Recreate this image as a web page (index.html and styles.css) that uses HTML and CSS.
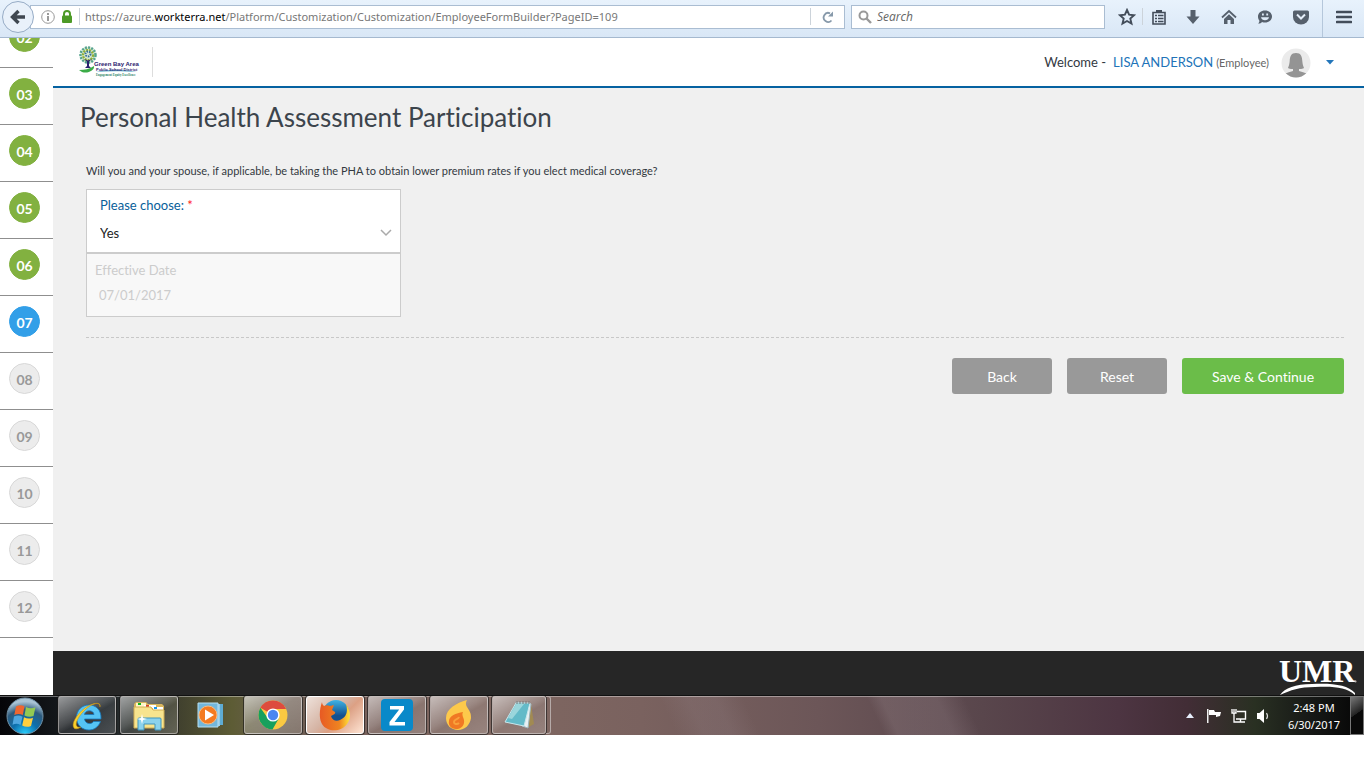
FILE: index.html
```html
<!DOCTYPE html>
<html lang="en">
<head>
<meta charset="utf-8">
<title>Personal Health Assessment Participation</title>
<link rel="stylesheet" href="styles.css">
</head>
<body>
<nav class="browser" aria-label="Browser toolbar">
  <button class="back-btn" aria-label="Go back">
    <svg width="18" height="16" viewBox="0 0 18 16"><path d="M16 8H4M9.500 2L3.500 8l6 6" fill="none" stroke="#3f4750" stroke-width="3.400"/></svg>
  </button>
  <div class="address">
    <svg width="14" height="14" viewBox="0 0 14 14"><circle cx="7" cy="7" r="6.300" fill="none" stroke="#999"/><path d="M6 3h2v2H6zM6 6h2v5H6z" fill="#999"/></svg>
    <svg class="lock" width="12" height="14" viewBox="0 0 12 14"><rect x="1" y="5.500" width="10" height="7.500" rx="1" fill="#4d9a27"/><path d="M3 6V4a3 3 0 0 1 6 0v2" fill="none" stroke="#4d9a27" stroke-width="2"/></svg>
    <span class="rule"></span>
    <span class="url">https://azure.<b>workterra.net</b>/Platform/Customization/Customization/EmployeeFormBuilder?PageID=109</span>
    <span class="rule"></span>
    <button class="reload" aria-label="Reload"><svg width="14" height="14" viewBox="0 0 14 14"><path d="M10.500 10.500A4.500 4.500 0 1 1 9 3.300" fill="none" stroke="#8799aa" stroke-width="1.800"/><path d="M12 1.500v5H7z" fill="#8799aa"/></svg></button>
  </div>
  <label class="search">
    <svg width="14" height="14" viewBox="0 0 14 14"><circle cx="5.500" cy="5.500" r="4" fill="none" stroke="#999" stroke-width="2"/><path d="M8.500 8.500l4.500 4.500" stroke="#999" stroke-width="2.400"/></svg>
    <input type="search" placeholder="Search" aria-label="Search">
  </label>
  <div class="tools">
    <button class="tool" aria-label="Bookmark"><svg width="18" height="18" viewBox="0 0 18 18"><path d="M9 2l2.100 4.700 5 .5-3.800 3.400 1.200 5L9 13l-4.500 2.600 1.200-5L1.900 7.200l5-.5z" fill="none" stroke="#434d5a" stroke-width="1.900"/></svg></button>
    <span class="rule"></span>
    <button class="tool" aria-label="Bookmarks list"><svg width="16" height="16" viewBox="0 0 16 16"><path d="M2 3.500h12v11.500H2z" fill="#dfebf8" stroke="#434d5a" stroke-width="1.600"/><path d="M5 1h6v3H5z" fill="#434d5a"/><path d="M4 6.500h2M4 9.500h2M4 12.500h2M7 6.500h5.500M7 9.500h5.500M7 12.500h5.500" stroke="#434d5a" stroke-width="1.300"/></svg></button>
    <button class="tool" aria-label="Downloads"><svg width="16" height="16" viewBox="0 0 16 16"><path d="M5.500 1h5v6.500h4L8 15 1.500 7.500h4z" fill="#56606c"/></svg></button>
    <button class="tool" aria-label="Home"><svg width="16" height="16" viewBox="0 0 16 16"><path d="M1 8.500L8 2l7 6.500" fill="none" stroke="#56606c" stroke-width="1.800"/><path d="M3 10l5-4.800 5 4.800v5H9.500v-4h-3v4H3z" fill="#56606c"/></svg></button>
    <button class="tool" aria-label="Chat"><svg width="16" height="16" viewBox="0 0 16 16"><path d="M8 1.500c4 0 7 2.600 7 6s-3 6-7 6c-1 0-2-.1-3-.5-1 1.300-2.600 1.800-4 1.500 1-.8 1.400-1.700 1.400-2.800C1.500 10.600 1 9.100 1 7.500c0-3.400 3-6 7-6z" fill="#56606c"/><path d="M4 8.200h8c-.5 4-7.500 4-8 0zM5 4.500h1.800v2H5zM9.300 4.500h1.800v2H9.300z" fill="#dfebf8"/></svg></button>
    <button class="tool" aria-label="Pocket"><svg width="18" height="16" viewBox="0 0 18 16"><path d="M2.500 1.500h13q1.500 0 1.500 1.500v5a8 7.500 0 0 1-16 0V3q0-1.500 1.500-1.500z" fill="#56606c"/><path d="M5 5.500l4 4 4-4" fill="none" stroke="#e5eef9" stroke-width="2"/></svg></button>
    <button class="tool menu" aria-label="Menu"><svg width="16" height="14" viewBox="0 0 16 14"><path d="M1 2h14M1 7h14M1 12h14" stroke="#434d5a" stroke-width="2.600" stroke-linecap="round"/></svg></button>
  </div>
</nav>

<div class="page">
  <aside class="sidebar">
    <ol class="steps">
      <li><a class="step done" href="#s2">02</a></li>
      <li><a class="step done" href="#s3">03</a></li>
      <li><a class="step done" href="#s4">04</a></li>
      <li><a class="step done" href="#s5">05</a></li>
      <li><a class="step done" href="#s6">06</a></li>
      <li><a class="step current" href="#s7" aria-current="step">07</a></li>
      <li><a class="step" href="#s8">08</a></li>
      <li><a class="step" href="#s9">09</a></li>
      <li><a class="step" href="#s10">10</a></li>
      <li><a class="step" href="#s11">11</a></li>
      <li><a class="step" href="#s12">12</a></li>
    </ol>
  </aside>
  <div class="content">
    <header class="site-head">
      <svg class="brand" width="62" height="32" viewBox="0 0 62 32" role="img" aria-label="Green Bay Area Public School District">
        <circle cx="10" cy="9" r="8" fill="#d5e7cf"/>
        <circle cx="10" cy="9" r="7.500" fill="none" stroke="#55a38d" stroke-width="2.500" stroke-dasharray="2 1.200"/>
        <circle cx="10" cy="9" r="5" fill="none" stroke="#8eae35" stroke-width="2.200" stroke-dasharray="2 1"/>
        <circle cx="10" cy="8" r="2.500" fill="none" stroke="#356e9e" stroke-width="2" stroke-dasharray="1.500 1"/>
        <path d="M6 13l3 2.500V20l-2 2h6l-2-2v-4.500l3-2.500-4 1.500z" fill="#29206f"/>
        <path d="M1 24c6 0 10-1 15-4 1 4-6 8-12 6z" fill="#3cac48"/>
        <path d="M18 26c12-3 25-3 41 0-16-1-28-1-41 0z" fill="#65b1ce"/>
        <text class="brand-name" x="16" y="20">Green Bay Area</text>
        <text class="brand-sub" x="18" y="25">Public School District</text>
        <text class="brand-motto" x="18" y="30">Engagement Equity Excellence</text>
      </svg>
      <span class="brand-rule"></span>
      <div class="user">
        <span class="welcome">Welcome -</span>
        <a class="user-name" href="#profile">LISA ANDERSON</a>
        <span class="role">(Employee)</span>
        <svg class="avatar" width="30" height="30" viewBox="0 0 30 30"><defs><clipPath id="face"><circle cx="15" cy="15" r="14.500"/></clipPath></defs><circle cx="15" cy="15" r="14.500" fill="#ebebeb"/><path clip-path="url(#face)" d="M15 5c5 0 6 3.500 6.300 8 .2 3 .9 5 1.700 7-1.500 1-3.500 1.200-5 1v2c3 1 7 1.500 9 4v4H3v-4c2-2.500 6-3 9-4v-2c-1.500.2-3.500 0-5-1 .8-2 1.500-4 1.700-7C9 8.500 10 5 15 5z" fill="#949494"/></svg>
        <button class="caret" aria-label="Account menu"><svg width="8" height="5" viewBox="0 0 8 5"><path d="M0 0h8L4 4.500z" fill="#2376ba"/></svg></button>
      </div>
    </header>
    <main>
      <h1>Personal Health Assessment Participation</h1>
      <form class="form">
        <p class="question">Will you and your spouse, if applicable, be taking the PHA to obtain lower premium rates if you elect medical coverage?</p>
        <div class="field">
          <label for="choice">Please choose: <span class="required">*</span></label>
          <div class="select-row">
            <select id="choice"><option>Yes</option><option>No</option></select>
            <svg width="12" height="8" viewBox="0 0 12 8"><path d="M1 1l5 5 5-5" fill="none" stroke="#aaa" stroke-width="1.500"/></svg>
          </div>
        </div>
        <div class="field disabled">
          <label for="date">Effective Date</label>
          <input id="date" type="text" value="07/01/2017" disabled>
        </div>
        <div class="actions">
          <button type="button">Back</button>
          <button type="reset">Reset</button>
          <button type="button" class="primary">Save &amp; Continue</button>
        </div>
      </form>
    </main>
    <footer class="site-foot">
      <svg width="80" height="42" viewBox="0 0 80 42" role="img" aria-label="UMR"><text class="umr" x="1" y="29">UMR</text><path d="M2 42c5-7 15-11 32-11 21-1 36 1 43 9v2c-9-8-22-9-40-8-16 0-24 3-35 8z" fill="#fff"/><circle cx="77.500" cy="28.500" r="1" fill="#bbb"/></svg>
    </footer>
  </div>
</div>

<div class="taskbar">
  <button class="start" aria-label="Start"><svg width="38" height="38" viewBox="0 0 38 38"><defs><radialGradient id="orb" cx=".5" cy="1" r=".9"><stop offset="0" stop-color="#2bd2ff"/><stop offset=".4" stop-color="#0c70ae"/><stop offset=".75" stop-color="#2d5a7d"/><stop offset="1" stop-color="#a9c3d4"/></radialGradient></defs><circle cx="19" cy="19" r="18" fill="url(#orb)" stroke="#6f8fa5"/><path d="M10 9.500c3-1.800 6-1.500 8.500-.2L16.800 18c-2.500-1.300-5.500-1.500-8.500 0z" fill="#ee6630"/><path d="M20 10c3 1.500 6 1.700 9.500.3L27.500 19c-3 1.200-6 1-9-.5z" fill="#93c952"/><path d="M8 19.500c3-1.500 6-1.300 8.500.2L14.500 28c-2.500-1.500-5-1.600-8-.2z" fill="#4fa6df"/><path d="M18 20.300c3 1.500 6 1.700 9 .4L25 29c-3 1.300-6 1-8.800-.4z" fill="#ffcf3e"/></svg></button>
  <button class="task" aria-label="Internet Explorer"><svg width="32" height="32" viewBox="0 0 32 32"><path fill-rule="evenodd" d="M30 20H13.500c.5 5 7 6 9 2.500h7C27.500 28 23 31 18 31 11 31 5.500 26 5.500 18.500S11 6 18 6s12.500 5 12 14zM13.500 15.500H23c-.5-5-9-5-9.500 0z" fill="#55c4f5" stroke="#1878bd" stroke-width=".8"/><path d="M29 8c1.500-6-8-4-15 1C5 16 0 25 3 29c1 1.500 4 1 7-1-4 1-5.500-1-4.500-5C8 16 17 6 25 4.500c3-.5 4 1 4 3.500z" fill="#fad02c" stroke="#c69112" stroke-width=".5"/></svg></button>
  <button class="task" aria-label="Windows Explorer"><svg width="34" height="32" viewBox="0 0 34 32"><path d="M2 5l2-2h10l2 2h14l2 2v20H2z" fill="#d9b65d"/><path d="M4 4h10v5H4z" fill="#fff6c9"/><path d="M6 4h3v2H6z" fill="#12b51b"/><path d="M12 6h12v3H12z" fill="#fff"/><path d="M14 6h3v2h-3z" fill="#d64228"/><path d="M21 8h10v3H21z" fill="#fff"/><path d="M22 8h3v2h-3z" fill="#1696ed"/><path d="M2 8h17l2 3h11v18H2z" fill="#f8e48e" stroke="#d1ae54"/><path d="M6 31V20q0-1 1-1h21q1 0 1 1v11h-6v-6H12v6z" fill="#8bd2ed" stroke="#4195bd"/><path d="M10 15l1 4 4 1-4 1-1 4-1-4-4-1 4-1z" fill="#fff"/></svg></button>
  <button class="task plain" aria-label="Media Player"><svg width="30" height="30" viewBox="0 0 30 30"><path d="M12 4h15v21H12z" fill="#5eacd3"/><path d="M8 4h16v22H8z" fill="#93cbe7"/><path d="M2 3h20v24H2z" fill="#72b7db" stroke="#b8dff0"/><circle cx="12" cy="15" r="9" fill="#f47b21" stroke="#f9bb80"/><path d="M9 9.500v11L18 15z" fill="#fff"/></svg></button>
  <button class="task light" aria-label="Chrome"><svg width="30" height="30" viewBox="0 0 30 30"><circle cx="15" cy="15" r="14.500" fill="#fbc942"/><path d="M15 15L2.400 7.800A14.500 14.500 0 0 1 27.600 8L28 9H15z" fill="#dd4b3e"/><path d="M2.400 7.800A14.500 14.500 0 0 0 14.500 29.500L21 18l-6 3-6-4z" fill="#17a05d"/><circle cx="15" cy="15" r="6.600" fill="#fff"/><circle cx="15" cy="15" r="5.200" fill="#4a86f0"/></svg></button>
  <button class="task active" aria-label="Firefox"><svg width="32" height="32" viewBox="0 0 32 32"><defs><linearGradient id="fox" x2="1"><stop offset="0" stop-color="#e75a24"/><stop offset=".65" stop-color="#ef8420"/><stop offset="1" stop-color="#ffe63b"/></linearGradient><linearGradient id="globe" x2="0" y2="1"><stop offset="0" stop-color="#3fb4e6"/><stop offset=".6" stop-color="#14508e"/></linearGradient></defs><circle cx="17" cy="14" r="13" fill="url(#globe)"/><path d="M3 3c0 2 1 3 2 4 2-1 4-1 6 0l4-1-2 5 3 2c1 2-2 3-4 4 1 4 5 6 9 4 7-3 8-9 6-16 5 7 5 15 1 20-5 7-15 8-21 4C-1 24 0 12 3 3z" fill="url(#fox)"/></svg></button>
  <button class="task" aria-label="Z"><svg width="32" height="32" viewBox="0 0 32 32"><rect width="32" height="32" rx="4" fill="#0989c9"/><path d="M9 7h14v3.500L13.500 23H24v3.500H8.500V23L18.200 10.500H9z" fill="#fff"/></svg></button>
  <button class="task" aria-label="Flame"><svg width="30" height="32" viewBox="0 0 30 32"><path d="M23 1c-4 7 5 9 4 18-1 7-6 12-13 12S2 26 2 19C2 10 12 4 23 1z" fill="#fdc94b"/><path d="M19 13c-2 4 2 6 1 11-1 4-4 6-8 6-5 0-8-4-7-8 0-5 7-8 14-9z" fill="#f07924"/><path d="M15 18c-1 3-5 2-5 5 0 2 3 3 5 1" fill="none" stroke="#f9a13b" stroke-width="2"/></svg></button>
  <button class="task last" aria-label="Notepad"><svg width="32" height="32" viewBox="0 0 32 32"><path d="M28 5l3 20-7 4z" fill="#a18a52"/><path d="M13 3l15 2-3 24-6-2z" fill="#e8f0f2" stroke="#9eb6be"/><path d="M13 4h14l-6 23-19-4z" fill="#63bac8" stroke="#c8e7ec"/><path d="M13 5h8L9 20l-4-1z" fill="#9bd6dc"/><path d="M14 2v3M17 2v3M20 2v3M23 2v3M26 2v3" stroke="#777"/></svg></button>
  <span class="stack"></span>
  <div class="tray">
    <svg class="more" width="8" height="5" viewBox="0 0 8 5"><path d="M0 5h8L4 0z" fill="#e7eefc"/></svg>
    <svg width="16" height="16" viewBox="0 0 16 16"><path d="M1 1h1.500v14H1z" fill="#eee"/><path d="M3 2h5l1 2h6l-1 4-4 1V7H3z" fill="#fff"/></svg>
    <svg width="16" height="16" viewBox="0 0 16 16"><path d="M6 3.500h8.500v7.500H5M9.500 11v3M6 14h8" fill="none" stroke="#fff" stroke-width="1.400"/><path d="M1 1v4h4V1M3 1v3M3 5v9h3" fill="none" stroke="#fff" stroke-width="1.300"/></svg>
    <svg width="16" height="16" viewBox="0 0 16 16"><path d="M1 5h2.500L8 1v14L3.500 11H1z" fill="#fff"/><path d="M10.500 5q2 3 0 6" fill="none" stroke="#ddd" stroke-width="1.200"/></svg>
  </div>
  <div class="clock"><time>2:48 PM</time><span>6/30/2017</span></div>
  <button class="desktop" aria-label="Show desktop"></button>
</div>
</body>
</html>
```
FILE: styles.css
```css
* { box-sizing: border-box; }
body {
  margin: 0;
  height: 100vh;
  padding: 0 2px 33px 0;
  display: flex;
  flex-direction: column;
  background: #fff;
  color: #33393f;
  font-family: Lato, "Liberation Sans", sans-serif;
  font-size: 13px;
  font-variant-ligatures: none;
}
button { font: inherit; font-variant-ligatures: none; border: 0; padding: 0; background: none; }
svg { display: block; flex: none; }
a { text-decoration: none; }

/* Browser toolbar */
.browser {
  height: 38px;
  flex: none;
  display: flex;
  align-items: center;
  padding: 0 0 4px 2px;
  background: linear-gradient(#e8f2fc, #d9e7f6);
  border-bottom: 1px solid #a5b9cf;
}
.back-btn {
  width: 32px;
  height: 32px;
  flex: none;
  display: grid;
  place-items: center;
  border: 1px solid #97acc6;
  border-radius: 50%;
  background: #e9f1fa;
  z-index: 1;
}
.address, .search {
  height: 24px;
  display: flex;
  align-items: center;
  border: 1px solid #aabdd2;
  background: #fff;
}
.address { flex: 1; margin: 0 6px 0 -4px; padding-left: 10px; }
.lock { margin: 0 6px; }
.rule { width: 1px; height: 17px; background: #ccd3da; flex: none; }
.url { flex: 1; padding-left: 5px; color: #777; font-family: "Noto Sans", sans-serif; font-size: 11px; white-space: nowrap; }
.url b { font-weight: 400; color: #000; }
.reload { width: 33px; display: grid; place-items: center; }
.search { width: 254px; padding: 0 6px; gap: 5px; }
.search input {
  flex: 1;
  min-width: 0;
  padding: 0;
  border: 0;
  outline: 0;
  background: none;
  font: italic 12px "Open Sans", sans-serif;
}
.search input::placeholder { color: #666; opacity: 1; }
.tools { display: flex; align-items: center; align-self: stretch; margin-left: 9px; }
.tool { width: 36px; height: 33px; display: grid; place-items: center; }
.tool:first-child { width: 25px; margin-right: 3px; }
.tools .rule + .tool { width: 32px; }
.menu { width: 42px; height: 37px; margin: 0 0 -4px 3px; padding-bottom: 4px; border-left: 1px solid #b5c7db; }

/* Page frame */
.page { flex: 1; min-height: 0; display: flex; }
.sidebar { width: 53px; flex: none; overflow: hidden; background: #fff; }
.steps { list-style: none; margin: -27px 0 0; padding: 0; }
.steps li { height: 57px; padding: 10px 0 0 9px; border-bottom: 1px solid #8f8f8f; }
.step {
  width: 31px;
  height: 31px;
  display: block;
  border: 1px solid #d8d8d8;
  border-radius: 50%;
  background: #ececec;
  color: #999;
  font-size: 14px;
  font-weight: 700;
  line-height: 32px;
  text-align: center;
}
.done { background: #82b140; border-color: #82b140; color: #fff; }
.current { background: #329fe8; border-color: #329fe8; color: #fff; }
.content { flex: 1; min-width: 0; display: flex; flex-direction: column; background: #f0f0f0; }

/* Site header */
.site-head {
  height: 50px;
  flex: none;
  display: flex;
  align-items: center;
  padding: 0 26px 0 25px;
  border-bottom: 2px solid #0562a1;
  background: #fff;
}
.brand-name { font: bold 6px "Liberation Sans", sans-serif; fill: #2c226f; }
.brand-sub { font: bold 4px "Liberation Sans", sans-serif; fill: #2c226f; }
.brand-motto { font: bold 3px "Liberation Serif", serif; fill: #278565; }
.brand-rule { width: 1px; height: 30px; margin-left: 12px; background: #ddd; }
.user { margin-left: auto; display: flex; align-items: center; }
.welcome { font-size: 13px; margin-right: 7px; }
.user-name { color: #2173b8; font-size: 13px; margin-right: 3px; }
.role { color: #666; font-size: 11px; }
.avatar { margin: 2px 11px 0 12px; }
.caret { width: 16px; height: 20px; display: grid; place-items: center; }

/* Form */
main { flex: 1; padding: 12px 20px 0 27px; }
h1 { margin: 0; font-size: 26px; font-weight: 400; line-height: 34px; color: #3c444c; }
.form { padding-left: 6px; }
.question { margin: 29px 0 10px; font-size: 11px; line-height: 16px; }
.field { width: 315px; height: 64px; padding: 6px 8px 0 13px; border: 1px solid #ccc; background: #fff; }
.field label { display: block; font-size: 13px; line-height: 18px; color: #08609a; }
.required { color: #f22; }
.select-row { display: flex; align-items: center; margin-top: 9px; }
select {
  flex: 1;
  height: 20px;
  padding: 0;
  border: 0;
  appearance: none;
  background: none;
  color: #222;
  font: 13px Lato, sans-serif;
}
.disabled { background: #f8f8f8; padding-top: 7px; padding-left: 8px; }
.disabled label { color: #ccc; }
.disabled input {
  width: 100%;
  height: 20px;
  margin-top: 6px;
  padding: 0 4px;
  border: 0;
  background: none;
  color: #ccc;
  font: 13px Lato, sans-serif;
}
.actions {
  display: flex;
  justify-content: flex-end;
  gap: 15px;
  margin-top: 20px;
  padding-top: 20px;
  border-top: 1px dashed #c8c8c8;
}
.actions button { width: 100px; height: 36px; border-radius: 3px; background: #999; color: #fff; font-size: 14px; }
.actions .primary { width: 162px; background: #6bbd49; }
.site-foot { height: 44px; flex: none; display: flex; justify-content: flex-end; align-items: flex-end; padding-right: 6px; background: #262626; }
.umr { font: bold 32px "Liberation Serif", serif; fill: #fff; }

/* Taskbar */
.taskbar {
  height: 40px;
  flex: none;
  display: flex;
  gap: 4px;
  border-top: 1px solid #111;
  box-shadow: inset 0 1px #ffffff60;
  background: linear-gradient(65deg, transparent 49%, #9a8a9030 51%, #9a8a9030 53%, transparent 55%, transparent 64%, #9a8a9040 65%, #9a8a9040 69%, transparent 71%),
    linear-gradient(90deg, #050508 0, #20262a 8%, #40402e 13%, #5d5c35 17%, #6a5e50 20%, #765f5a 25%, #806861 35%, #7a625f 47%, #6c5658 60%, #59464c 72%, #4d3542 82%, #422d36 87%, #293022 92%, #171917 96%, #050505 100%);
}
.start { width: 54px; flex: none; display: grid; place-items: center; padding-right: 4px; }
.task {
  width: 58px;
  height: 38px;
  flex: none;
  display: grid;
  place-items: center;
  border: 1px solid #cfcac899;
  border-radius: 3px;
  background: linear-gradient(150deg, #ffffff90, #ffffff38 45%, #ffffff1c 55%, #ffffff30);
  box-shadow: 0 0 0 1px #181818a0;
}
.plain { border: 0; background: none; box-shadow: none; }
.light { background: linear-gradient(150deg, #ffffffa0, #ffffff45 45%, #ffffff28); }
.active { background: linear-gradient(135deg, #eee1da, #d5b3a3 45%, #dca084 60%, #ffe5d5); border-color: #fff; }
.last { width: 54px; }
.stack { width: 5px; height: 38px; margin: 0 0 0 -4px; border: 1px solid #b6aaa8; border-left: 0; border-radius: 0 3px 3px 0; }
.tray { margin-left: auto; display: flex; align-items: center; gap: 9px; margin-right: 6px; }
.more { margin-right: 3px; }
.clock {
  width: 64px;
  display: flex;
  flex-direction: column;
  align-items: center;
  justify-content: center;
  color: #fff;
  font: 11px/17px "Noto Sans", sans-serif;
}
.desktop { width: 14px; border: 1px solid #777; background: linear-gradient(145deg, #777, #222 45%, #080808 46%); }
```
